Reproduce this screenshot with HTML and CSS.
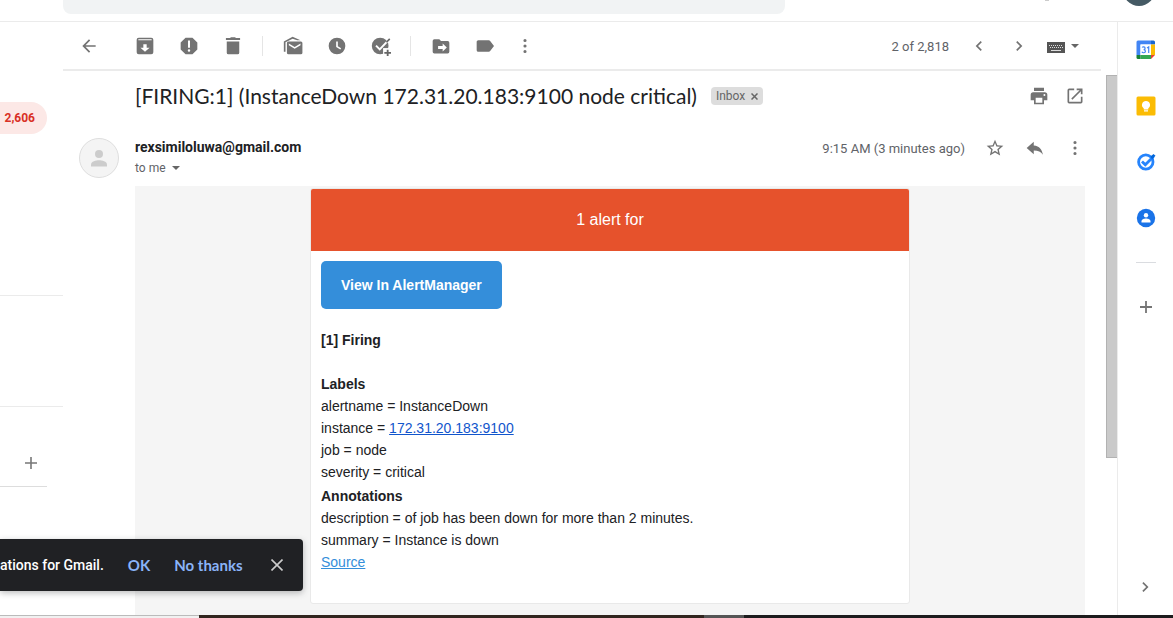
FILE: index.html
```html
<!DOCTYPE html>
<html lang="en">
<head>
<meta charset="utf-8">
<title>[FIRING:1] InstanceDown - Gmail</title>
<link rel="stylesheet" href="styles.css">
</head>
<body>
<header class="topbar">
  <div class="search"></div>
  <span class="apps-dot"></span>
  <button class="account" aria-label="Account"></button>
</header>

<div class="workspace">
  <nav class="sidebar" aria-label="Mail">
    <a class="inbox-count" href="#">2,606</a>
    <div class="nav-block nav-folders"></div>
    <div class="nav-block nav-meet"></div>
    <div class="nav-chat">
      <button class="icon" aria-label="New chat"><svg viewBox="0 0 20 20"><path d="M10 4v12M4 10h12" stroke="#777" stroke-width="1.6"/></svg></button>
    </div>
  </nav>

  <main class="content">
    <div class="toolbar">
      <button class="icon back" aria-label="Back"><svg viewBox="0 0 24 24"><path d="M20 11H7.83l5.59-5.59L12 4l-8 8 8 8 1.41-1.41L7.83 13H20z"/></svg></button>
      <div class="tools">
        <button class="icon" aria-label="Archive"><svg viewBox="0 0 24 24"><path fill-rule="evenodd" d="M4.500 2h15A2.500 2.500 0 0 1 22 4.500v15a2.500 2.500 0 0 1-2.500 2.500h-15A2.500 2.500 0 0 1 2 19.500v-15A2.500 2.500 0 0 1 4.500 2zM4 4v1.200h16V4zm6 6v4H6.500l5.500 5 5.500-5H14v-4z"/></svg></button>
        <button class="icon" aria-label="Report spam"><svg viewBox="0 0 24 24"><path fill-rule="evenodd" d="M7.860 2h8.280L22 7.860v8.280L16.140 22H7.860L2 16.140V7.860zM10.800 5.500v8.500h2.400V5.500zM12 16a1.500 1.500 0 1 0 0 3 1.500 1.500 0 0 0 0-3z"/></svg></button>
        <button class="icon" aria-label="Delete"><svg viewBox="0 0 24 24"><path d="M3.500 2.500h5l1-1h5l1 1h5v2.200h-17zM4.500 6.500h15V20a2 2 0 0 1-2 2h-11a2 2 0 0 1-2-2z"/></svg></button>
      </div>
      <span class="divider"></span>
      <div class="tools">
        <button class="icon" aria-label="Mark as unread"><svg viewBox="0 0 24 24"><path fill-rule="evenodd" d="M1 19V6.500L11.500 1 21 5.200h-4L11.500 3.200 3 7.500V19zM6.500 6.500h15A1.800 1.800 0 0 1 23.300 8.300v12a1.800 1.800 0 0 1-1.800 1.700h-15a1.800 1.800 0 0 1-1.800-1.800V8.300A1.800 1.800 0 0 1 6.500 6.500zM7 9v2l7 4.200 7-4.200V9l-7 4.200z"/></svg></button>
        <button class="icon" aria-label="Snooze"><svg viewBox="0 0 24 24"><path fill-rule="evenodd" d="M12 2a10 10 0 1 0 0 20 10 10 0 0 0 0-20zM11 6.500h2v5.700l4 2.400-1 1.700-5-3z"/></svg></button>
        <button class="icon" aria-label="Add to tasks"><svg viewBox="0 0 24 24"><circle cx="11" cy="12" r="10"/><path d="M6 11.500l4.500 4.500L21 5" fill="none" stroke="#fff" stroke-width="2.400"/><path d="M18.500 7.500l4-4" fill="none" stroke="#666" stroke-width="2"/><path d="M14.500 14.500H24V24h-9.500z" fill="#fff"/><path d="M20 16.500V24M16 20.200h8" stroke="#666" stroke-width="2.200"/></svg></button>
      </div>
      <span class="divider"></span>
      <div class="tools">
        <button class="icon" aria-label="Move to"><svg viewBox="0 0 24 24"><path fill-rule="evenodd" d="M4 4h6l2 2h8a2 2 0 0 1 2 2v11a2 2 0 0 1-2 2H4a2 2 0 0 1-2-2V6a2 2 0 0 1 2-2zM8.500 12v3.500H14V18.500l5-4.800-5-4.700V12z"/></svg></button>
        <button class="icon" aria-label="Labels"><svg viewBox="0 0 24 24"><path d="M4 5h12.500c.7 0 1.300.3 1.700.9L22.800 12l-4.600 6.100c-.4.600-1 .9-1.700.9H4a2 2 0 0 1-2-2V7c0-1.100.9-2 2-2z"/></svg></button>
      </div>
      <button class="icon more" aria-label="More"><svg viewBox="0 0 24 24"><path d="M12 3.500a1.900 1.900 0 1 0 0 3.800 1.900 1.900 0 0 0 0-3.800zM12 10.100a1.900 1.900 0 1 0 0 3.800 1.900 1.900 0 0 0 0-3.800zM12 16.700a1.900 1.900 0 1 0 0 3.800 1.900 1.900 0 0 0 0-3.800z"/></svg></button>
      <div class="pager">
        <span class="meta">2 of 2,818</span>
        <button class="icon" aria-label="Newer"><svg viewBox="0 0 24 24"><path d="M15.410 7.410L14 6l-6 6 6 6 1.410-1.410L10.830 12z"/></svg></button>
        <button class="icon" aria-label="Older"><svg viewBox="0 0 24 24"><path d="M8.590 16.590L10 18l6-6-6-6-1.410 1.410L13.170 12z"/></svg></button>
        <button class="keyboard" aria-label="Input tools"><svg width="18" height="14" viewBox="0 0 18 14"><rect y="3" width="18" height="11" fill="#555"/><path d="M2 6.500h14M3 8.500h13" stroke="#ddd" stroke-width="1" stroke-dasharray="1 1"/><path d="M4 11.500h10" stroke="#ddd"/></svg><svg width="8" height="4" viewBox="0 0 8 4"><path d="M0 0h8L4 4z"/></svg></button>
      </div>
    </div>

    <div class="scroll-area">
      <article class="message">
        <div class="subject-row">
          <h1 class="subject">[FIRING:1] (InstanceDown 172.31.20.183:9100 node critical)</h1>
          <span class="chip">Inbox <button class="chip-close" aria-label="Remove label Inbox"><svg width="7" height="7" viewBox="0 0 7 7"><path d="M.5.5l6 6M6.500.5l-6 6" stroke="#666" stroke-width="1.500"/></svg></button></span>
          <div class="subject-actions">
            <button class="icon" aria-label="Print"><svg viewBox="0 0 24 24"><path fill-rule="evenodd" d="M6 2h12v4H6zM5 7.500h14a3 3 0 0 1 3 3V17h-4v5H6v-5H2v-6.500a3 3 0 0 1 3-3zM8 14v6h8v-6zm10.500-4.500a1.200 1.200 0 1 0 0 2.400 1.200 1.200 0 0 0 0-2.400z"/></svg></button>
            <button class="icon" aria-label="Open in new window"><svg viewBox="0 0 24 24"><path d="M19 19H5V5h6V3H5a2 2 0 0 0-2 2v14a2 2 0 0 0 2 2h14a2 2 0 0 0 2-2v-6h-2zM14 3v2h3.590L7.500 15.100l1.400 1.400L19 6.410V10h2V3z"/></svg></button>
          </div>
        </div>

        <div class="sender-row">
          <svg class="avatar" viewBox="0 0 40 40"><circle cx="20" cy="20" r="19.500" fill="#f4f4f4" stroke="#dedede"/><circle cx="20" cy="16" r="4" fill="#ccc"/><path d="M12 28.500v-2c0-3 5-4.200 8-4.200s8 1.200 8 4.200v2z" fill="#ccc"/></svg>
          <div class="sender">
            <strong class="sender-name">rexsimiloluwa@gmail.com</strong>
            <button class="recipient">to me <svg width="8" height="4" viewBox="0 0 8 4"><path d="M0 0h8L4 4z"/></svg></button>
          </div>
          <div class="sender-actions">
            <time class="meta">9:15 AM (3 minutes ago)</time>
            <button class="icon" aria-label="Star"><svg viewBox="0 0 24 24"><path d="M22 9.240l-7.190-.62L12 2 9.190 8.630 2 9.240l5.460 4.730L5.820 21 12 17.270 18.180 21l-1.630-7.030zM12 15.400l-3.760 2.270 1-4.280-3.320-2.880 4.380-.38L12 6.100l1.710 4.040 4.380.38-3.320 2.880 1 4.280z"/></svg></button>
            <button class="icon" aria-label="Reply"><svg viewBox="0 0 24 24"><path d="M10.500 9V4.500L2 12l8.500 7.500V15c5.500 0 8.500 1.500 11 5-1-5.500-4-10.500-11-11z"/></svg></button>
            <button class="icon" aria-label="More"><svg viewBox="0 0 24 24"><path d="M12 3.500a1.900 1.900 0 1 0 0 3.800 1.900 1.900 0 0 0 0-3.800zM12 10.100a1.900 1.900 0 1 0 0 3.800 1.900 1.900 0 0 0 0-3.800zM12 16.700a1.900 1.900 0 1 0 0 3.800 1.900 1.900 0 0 0 0-3.800z"/></svg></button>
          </div>
        </div>

        <div class="mail-body">
          <div class="alert-card">
            <div class="alert-title">1 alert for</div>
            <div class="alert-content">
              <a class="alert-button" href="#">View In AlertManager</a>
              <h2 class="firing">[1] Firing</h2>
              <section class="details">
                <h3>Labels</h3>
                <p>alertname = InstanceDown</p>
                <p>instance = <a class="host" href="#">172.31.20.183:9100</a></p>
                <p>job = node</p>
                <p>severity = critical</p>
              </section>
              <section class="details">
                <h3>Annotations</h3>
                <p>description = of job has been down for more than 2 minutes.</p>
                <p>summary = Instance is down</p>
                <p><a class="source" href="#">Source</a></p>
              </section>
            </div>
          </div>
        </div>
      </article>
      <div class="scrollbar"><div class="thumb"></div></div>
    </div>
  </main>

  <aside class="addons" aria-label="Side panel">
    <button class="icon" aria-label="Calendar"><svg viewBox="0 0 20 20"><path d="M.5 2A1.500 1.500 0 0 1 2 .5H15v4H4.500V15H.5z" fill="#4285f4"/><path d="M15 .5h2.500A1.500 1.500 0 0 1 19 2v2.500h-4z" fill="#1967d2"/><path d="M15 4.500h4V15h-4z" fill="#fbbc04"/><path d="M4.500 15H15v4H4.500z" fill="#34a853"/><path d="M.5 15h4v4H2a1.500 1.500 0 0 1-1.500-1.500z" fill="#188038"/><path d="M15 15h4l-4 4z" fill="#ea4335"/><path d="M4.500 4.500H15V15H4.500z" fill="#fff"/><path d="M6.200 7.600c.5-1 2.900-1 2.900.7 0 1-1 1.400-1.500 1.400.8 0 1.800.4 1.800 1.500 0 1.900-2.900 2-3.500.6M11 8l1.700-1.100v6" fill="none" stroke="#4285f4" stroke-width="1.200"/></svg></button>
    <button class="icon" aria-label="Keep"><svg viewBox="0 0 20 20"><rect x=".5" y=".5" width="19" height="19" rx="1.500" fill="#fbbc04"/><path d="M10 5a4 4 0 0 0-2.300 7.300v1.200h4.600v-1.200A4 4 0 0 0 10 5zM8 14.300h4v1.200H8z" fill="#fff"/></svg></button>
    <button class="icon" aria-label="Tasks"><svg viewBox="0 0 20 20"><circle cx="9.800" cy="10" r="7.200" fill="#fff" stroke="#2684fc" stroke-width="2.800"/><path d="M6 9.500l3.300 3.300L17.500 4.500" fill="none" stroke="#2684fc" stroke-width="2.800"/><path d="M14.500 4.500l3-2.500 2 1.800-3.500 3.800z" fill="#0066da"/></svg></button>
    <button class="icon" aria-label="Contacts"><svg viewBox="0 0 20 20"><circle cx="10" cy="10" r="9.200" fill="#1a73e8"/><circle cx="10" cy="7.200" r="2.200" fill="#fff"/><path d="M5.500 14.500v-1.300c0-1.900 2.700-2.700 4.500-2.700s4.500.8 4.500 2.700v1.300z" fill="#fff"/></svg></button>
    <span class="addons-rule"></span>
    <button class="icon" aria-label="Get add-ons"><svg viewBox="0 0 20 20"><path d="M10 4v12M4 10h12" stroke="#757575" stroke-width="1.800"/></svg></button>
    <button class="icon collapse" aria-label="Hide side panel"><svg viewBox="0 0 24 24"><path d="M7.590 16.590L9 18l6-6-6-6-1.410 1.410L12.170 12z"/></svg></button>
  </aside>
</div>

<footer class="desktop-edge"><span class="edge-light"></span><span class="edge-brown"></span><span class="edge-grey"></span><span class="edge-dark"></span></footer>

<div class="snackbar" role="status">
  <span class="snack-text">ations for Gmail.</span>
  <button class="snack-action">OK</button>
  <button class="snack-action">No thanks</button>
  <button class="snack-close" aria-label="Close"><svg width="12" height="12" viewBox="0 0 12 12"><path d="M.5.5l11 11M11.500.5l-11 11" stroke="#ccc" stroke-width="1.600"/></svg></button>
</div>
</body>
</html>
```

FILE: styles.css
```css
* { box-sizing: border-box; }

body {
  margin: 0;
  height: 100vh;
  display: flex;
  flex-direction: column;
  position: relative;
  overflow: hidden;
  background: #fff;
  color: #202124;
  font-family: Roboto, "Liberation Sans", sans-serif;
  font-size: 12px;
}

button {
  border: 0;
  padding: 0;
  background: none;
  color: inherit;
  font: inherit;
  cursor: pointer;
}

h1, h2, h3, p { margin: 0; }

.icon { display: block; flex: none; width: 20px; height: 20px; }
.icon svg { display: block; width: 20px; height: 20px; fill: #737373; }
.meta { color: #5f6368; font-size: 13px; }

/* Top bar */
.topbar {
  flex: none;
  display: flex;
  align-items: flex-start;
  height: 22px;
  padding: 0 18px 0 63px;
  overflow: hidden;
  border-bottom: 1px solid #ebebeb;
}
.search { flex: 0 1 722px; height: 14px; border-radius: 0 0 8px 8px; background: #f1f3f4; }
.apps-dot { width: 4px; height: 1px; margin-left: auto; margin-right: 74px; background: #ccc; }
.account { flex: none; width: 32px; height: 32px; margin-top: -26px; border-radius: 50%; background: #455a64; }

.workspace { flex: 1; display: flex; min-height: 0; }

/* Left navigation */
.sidebar { flex: none; width: 63px; padding-top: 80px; }
.inbox-count {
  display: block;
  height: 32px;
  margin-right: 16px;
  padding-right: 12px;
  border-radius: 0 16px 16px 0;
  background: #fce8e6;
  color: #d93025;
  font-weight: 700;
  line-height: 32px;
  text-align: right;
  text-decoration: none;
}
.nav-block { border-bottom: 1px solid #ebebeb; }
.nav-folders { height: 162px; }
.nav-meet { height: 111px; }
.nav-chat {
  display: flex;
  align-items: center;
  justify-content: flex-end;
  height: 48px;
  margin: 32px 16px 0 0;
  padding-right: 6px;
  border-bottom: 1px solid #ddd;
}

/* Message pane */
.content { flex: 1; display: flex; flex-direction: column; min-width: 0; }
.toolbar {
  flex: none;
  display: flex;
  align-items: center;
  height: 49px;
  margin-right: 16px;
  padding: 1px 22px 0 16px;
  border-bottom: 2px solid #ebebeb;
}
.back { margin-right: 36px; }
.tools { display: flex; gap: 24px; }
.divider { width: 20px; height: 20px; margin-right: 20px; border-right: 1px solid #e5e5e5; }
.more { margin-left: 20px; }
.pager { display: flex; align-items: center; margin-left: auto; }
.pager .icon { margin-left: 20px; }
.keyboard { display: flex; align-items: center; gap: 6px; margin-left: 18px; }
.keyboard svg, .recipient svg { fill: #666; }

.scroll-area { flex: 1; display: flex; min-height: 0; }
.message { flex: 1; display: flex; flex-direction: column; min-width: 0; padding: 0 21px 0 16px; }
.scrollbar { flex: none; width: 11px; padding-top: 4px; }
.thumb { height: 71%; background: #cacaca; border: solid #b2b2b2; border-width: 1px 0 1px 1px; }

.subject-row { flex: none; display: flex; align-items: center; height: 50px; margin-left: 56px; }
.subject {
  font-family: Lato, "Open Sans", sans-serif;
  font-size: 21px;
  font-weight: 400;
  line-height: 28px;
  white-space: nowrap;
}
.chip {
  display: flex;
  align-items: center;
  gap: 6px;
  height: 18px;
  margin-left: 14px;
  padding: 0 5px;
  border-radius: 4px;
  background: #ddd;
  color: #666;
}
.chip-close { display: flex; }
.subject-actions { display: flex; gap: 16px; margin-left: auto; }

.sender-row { flex: none; display: flex; align-items: flex-start; margin-top: 16px; }
.avatar { flex: none; width: 40px; height: 40px; margin: 1px 16px 0 0; }
.sender { display: flex; flex-direction: column; align-items: flex-start; gap: 1px; }
.sender-name { font-size: 14px; font-weight: 700; line-height: 20px; }
.recipient { display: flex; align-items: center; gap: 6px; color: #5f6368; line-height: 20px; }
.sender-actions { display: flex; align-items: center; gap: 20px; height: 22px; margin-left: auto; }

/* Alert e-mail */
.mail-body {
  flex: 1;
  min-height: 0;
  margin: 8px 0 0 56px;
  padding-top: 2px;
  background: #f5f5f5;
  font-family: "Liberation Sans", Arial, sans-serif;
  font-size: 14px;
  line-height: 22px;
}
.alert-card { max-width: 600px; margin: 0 auto; overflow: hidden; border: 1px solid #e9e9e9; border-radius: 3px; background: #fff; }
.alert-title { padding: 20px; background: #e6522c; color: #fff; font-size: 16px; text-align: center; }
.alert-content { padding: 10px 10px 30px; }
.alert-button {
  display: inline-block;
  padding: 13px 20px;
  border-radius: 5px;
  background: #348eda;
  color: #fff;
  font-weight: 700;
  text-decoration: none;
}
.firing { margin: 20px 0 22px; font-size: 14px; line-height: 22px; }
.details + .details { margin-top: 2px; }
.details h3 { font-size: 14px; line-height: 22px; }
.host { color: #15c; }
.source { color: #348eda; }

/* Side panel */
.addons {
  flex: none;
  display: flex;
  flex-direction: column;
  align-items: center;
  gap: 36px;
  width: 56px;
  padding: 18px 0;
  border-left: 1px solid #ebebeb;
}
.addons-rule { width: 20px; margin: -2px 0; border-top: 1px solid #dadce0; }
.collapse { margin-top: auto; }

/* Strip of the desktop below the window */
.desktop-edge { flex: none; display: flex; height: 3px; }
.edge-light { width: 17%; background: #f1f1f1; border-top: 1px solid #bbb; }
.edge-brown { width: 43%; background: #32261f; }
.edge-grey { width: 40px; background: #555; }
.edge-dark { flex: 1; background: #1d1c1d; }

/* Notification prompt floating over the page */
.snackbar {
  position: absolute;
  left: 0;
  bottom: 27px;
  display: flex;
  align-items: center;
  height: 52px;
  padding-right: 20px;
  border-radius: 0 4px 4px 0;
  background: #202124;
  box-shadow: 0 2px 6px rgba(60, 64, 67, .35);
  color: #fff;
  font-size: 14px;
}
.snack-text { font-weight: 500; }
.snack-action { margin-left: 24px; color: #8ab4f8; font-family: Lato, sans-serif; font-size: 15px; font-weight: 700; line-height: 20px; }
.snack-close { display: flex; margin-left: 28px; }
```
